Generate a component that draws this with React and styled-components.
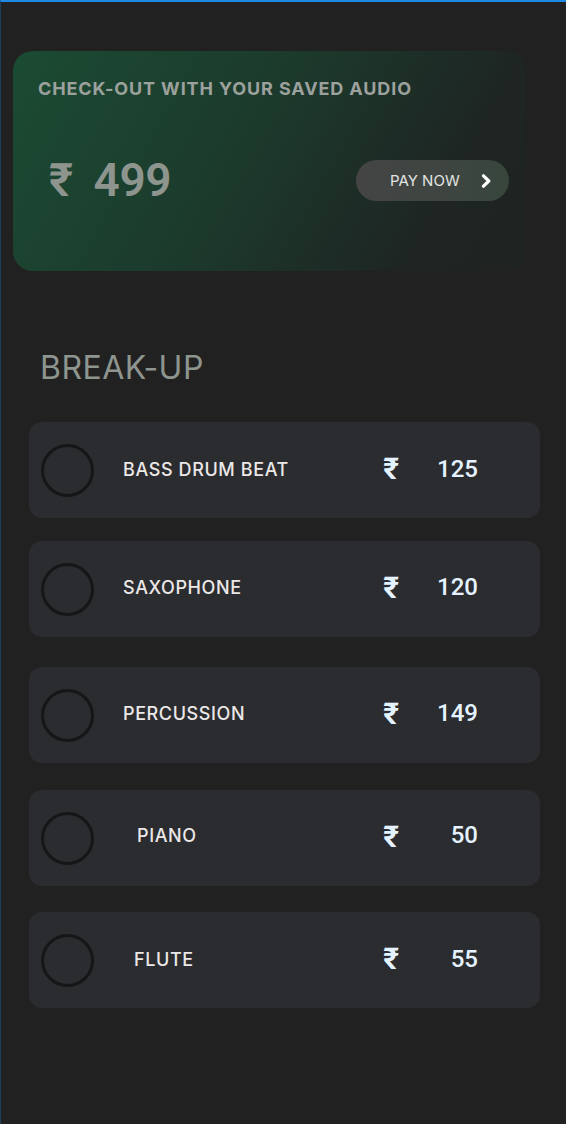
import React from "react";
import styled, { createGlobalStyle } from "styled-components";

const Global = createGlobalStyle`
  html, body { margin: 0; padding: 0; background: #212121; }
  body { font-family: "Inter", "Roboto", "Noto Sans", "DejaVu Sans", sans-serif; }
  * { box-sizing: border-box; }
`;

const Page = styled.div`
  min-height: 1124px;
  background: #212121;
  border-top: 2px solid #1e88e5;
  border-left: 1px solid #1d3f58;
  padding: 49px 27px 0 12px;
`;

const CheckoutCard = styled.section`
  width: 513px;
  height: 220px;
  border-radius: 20px;
  background: linear-gradient(120deg, #1b4b33 0%, #1c3a2c 45%, #1e2523 80%, #1f2322 100%);
  padding: 27px 17px 0 25px;
  display: flex;
  flex-direction: column;
`;

const CardTitle = styled.h2`
  margin: 0;
  font-size: 18px;
  line-height: 22px;
  font-weight: 700;
  letter-spacing: 0.88px;
  color: #9ca19d;
`;

const PriceRow = styled.div`
  margin-top: 60px;
  height: 41px;
  display: flex;
  align-items: center;
  justify-content: space-between;
`;

const BigPrice = styled.div`
  display: flex;
  align-items: center;
  gap: 21px;
  margin-left: 11px;
  font-family: "Roboto", sans-serif;
  font-size: 46px;
  line-height: 41px;
  font-weight: 600;
  letter-spacing: -0.5px;
  color: #8e958f;
`;

const PayButton = styled.button`
  width: 153px;
  height: 41px;
  border: none;
  border-radius: 21px;
  background: linear-gradient(90deg, #444544 0%, #3e4541 60%, #37463d 100%);
  color: #e2e4e2;
  font-family: inherit;
  font-size: 15px;
  font-weight: 400;
  display: flex;
  align-items: center;
  padding: 0 0 0 34px;
  gap: 21px;
  cursor: pointer;
`;

const Heading = styled.h3`
  margin: 78px 0 0 27px;
  font-size: 32px;
  line-height: 38px;
  font-weight: 400;
  letter-spacing: 0.5px;
  color: #8e958f;
`;

const List = styled.div`
  margin: 35px 0 0 16px;
  display: flex;
  flex-direction: column;
`;

const Row = styled.div`
  width: 511px;
  height: 96px;
  margin-top: ${(p) => p.$top}px;
  border-radius: 13px;
  background: #2b2c2f;
  display: flex;
  align-items: center;
  padding: 0 62px 0 12px;
`;

const Radio = styled.span`
  width: 53px;
  height: 53px;
  flex: none;
  border-radius: 50%;
  border: 3px solid #151617;
`;

const Label = styled.span`
  flex: 1;
  margin-left: ${(p) => 29 + p.$indent}px;
  margin-top: ${(p) => p.$shift}px;
  font-size: 18px;
  font-weight: 500;
  letter-spacing: 0.6px;
  color: #ece8e8;
`;

const Rupee = styled.span`
  font-family: "Roboto", sans-serif;
  font-size: 30px;
  font-weight: 700;
  color: #e4f3ff;
  margin-top: -3px;
`;

const Amount = styled.span`
  width: 60px;
  margin-left: 19px;
  text-align: right;
  font-family: "Roboto", sans-serif;
  font-size: 24px;
  font-weight: 500;
  color: #e4f3ff;
  margin-top: ${(p) => p.$shift}px;
`;

const Chevron = () => (
  <svg width="11" height="14" viewBox="0 0 11 14" fill="none">
    <path d="M2.5 1.8 L7.8 7 L2.5 12.2" stroke="#ffffff" strokeWidth="3.2" strokeLinecap="round" strokeLinejoin="round" />
  </svg>
);

const items = [
  { name: "BASS DRUM BEAT", price: 125, top: 0, indent: 0, shift: -2 },
  { name: "SAXOPHONE", price: 120, top: 23, indent: 0, shift: -4 },
  { name: "PERCUSSION", price: 149, top: 30, indent: 0, shift: -4 },
  { name: "PIANO", price: 50, top: 27, indent: 14, shift: -6 },
  { name: "FLUTE", price: 55, top: 26, indent: 11, shift: -2 },
];

export default function App() {
  return (
    <>
      <Global />
      <Page>
        <CheckoutCard>
          <CardTitle>CHECK-OUT WITH YOUR SAVED AUDIO</CardTitle>
          <PriceRow>
            <BigPrice>
              <span>₹</span>
              <span>499</span>
            </BigPrice>
            <PayButton>
              PAY NOW
              <Chevron />
            </PayButton>
          </PriceRow>
        </CheckoutCard>
        <Heading>BREAK-UP</Heading>
        <List>
          {items.map((it) => (
            <Row key={it.name} $top={it.top}>
              <Radio />
              <Label $indent={it.indent} $shift={it.shift}>{it.name}</Label>
              <Rupee>₹</Rupee>
              <Amount $shift={it.shift}>{it.price}</Amount>
            </Row>
          ))}
        </List>
      </Page>
    </>
  );
}
